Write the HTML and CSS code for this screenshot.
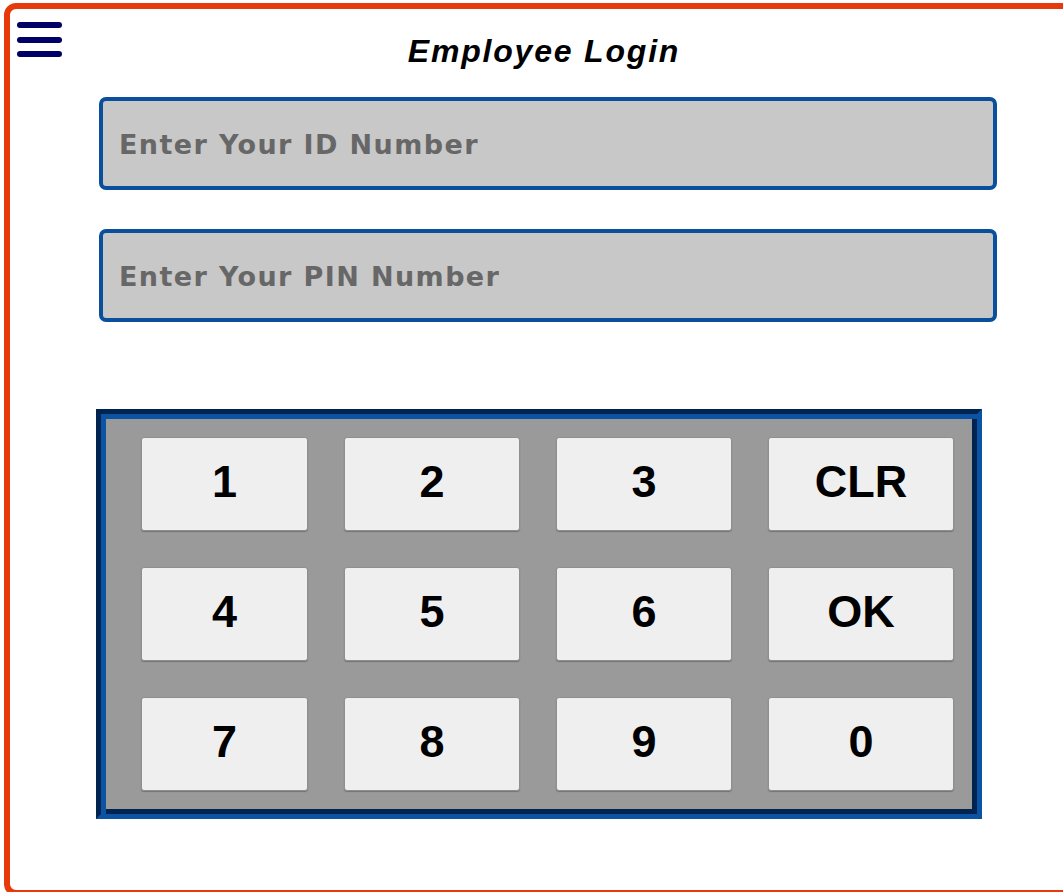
FILE: index.html
```html
<!DOCTYPE html>
<html lang="en">
<head>
<meta charset="utf-8">
<title>Employee Login</title>
<link rel="stylesheet" href="styles.css">
</head>
<body>
<div class="frame">
  <header class="topbar">
    <button class="menu" type="button" aria-label="Menu">
      <span class="bar"></span>
      <span class="bar"></span>
      <span class="bar"></span>
    </button>
    <h1 class="title">Employee Login</h1>
  </header>

  <form class="login">
    <input class="field" type="text" placeholder="Enter Your ID Number">
    <input class="field" type="password" placeholder="Enter Your PIN Number">
  </form>

  <div class="keypad">
    <button class="key" type="button">1</button>
    <button class="key" type="button">2</button>
    <button class="key" type="button">3</button>
    <button class="key" type="button">CLR</button>
    <button class="key" type="button">4</button>
    <button class="key" type="button">5</button>
    <button class="key" type="button">6</button>
    <button class="key" type="button">OK</button>
    <button class="key" type="button">7</button>
    <button class="key" type="button">8</button>
    <button class="key" type="button">9</button>
    <button class="key" type="button">0</button>
  </div>
</div>
</body>
</html>
```

FILE: styles.css
```css
html, body {
  margin: 0;
  padding: 0;
  background: #ffffff;
  overflow: hidden;
}

body {
  font-family: "Liberation Sans", Arial, sans-serif;
  padding: 3px 0 0 4px;
}

.frame {
  width: 1068px;
  height: 881px;
  border: 6px solid #e63a0c;
  border-radius: 12px;
  background: #ffffff;
  display: flex;
  flex-direction: column;
}

/* header: menu button on the left, centred title */
.topbar {
  position: relative;
  height: 88px;
  display: flex;
  justify-content: center;
}

.menu {
  position: absolute;
  left: 7px;
  top: 13px;
  width: 45px;
  padding: 0;
  border: 0;
  background: none;
  display: flex;
  flex-direction: column;
  gap: 8.5px;
  cursor: pointer;
}

.menu .bar {
  display: block;
  height: 6px;
  border-radius: 3px;
  background: #000066;
}

.title {
  margin: 24px 0 0;
  font-size: 32px;
  font-weight: bold;
  font-style: italic;
  letter-spacing: 1.8px;
  color: #000000;
  line-height: 36px;
  height: 36px;
}

/* input fields */
.login {
  display: flex;
  flex-direction: column;
  gap: 39px;
  margin-left: 89px;
}

.field {
  box-sizing: border-box;
  width: 898px;
  height: 93px;
  margin: 0;
  padding: 2px 16px 0;
  border: 4px solid #0a4f9c;
  border-radius: 7px;
  background: #c8c8c8;
  font-family: "DejaVu Sans", Verdana, sans-serif;
  font-weight: bold;
  font-size: 27px;
  letter-spacing: 1.4px;
  color: #333333;
  outline: none;
}

.field::placeholder {
  color: #676767;
  opacity: 1;
}

/* numeric keypad: two-tone grooved frame around a grey panel */
.keypad {
  box-sizing: border-box;
  width: 886px;
  height: 410px;
  margin: 87px 0 0 86px;
  padding: 23px 23px 23px 40px;
  background: #9a9a9a;
  border: 5px solid;
  border-color: #00234f #0b53a3 #0b53a3 #00234f;
  box-shadow: inset 5px 5px 0 #0b53a3, inset -5px -5px 0 #00234f;
  display: grid;
  grid-template-columns: 167px 176px 176px 186px;
  grid-auto-rows: 94px;
  column-gap: 36px;
  row-gap: 36px;
}

.key {
  margin: 0;
  padding: 0 0 5px;
  border: 1px solid #8f8f8f;
  border-radius: 3px;
  background: #efefef;
  box-shadow: 0 1px 1px rgba(0, 0, 0, 0.25);
  font-family: "Liberation Sans", Arial, sans-serif;
  font-weight: bold;
  font-size: 45px;
  color: #000000;
  cursor: pointer;
}
```
